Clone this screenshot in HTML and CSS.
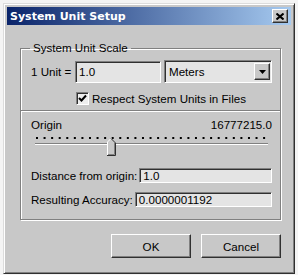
FILE: index.html
```html
<!DOCTYPE html>
<html lang="en">
<head>
    <meta charset="UTF-8">
    <title>System Unit Setup</title>
    <link rel="stylesheet" href="styles.css">
</head>
<body>
    <div class="window">
        <div class="titlebar">
            <span class="title">System Unit Setup</span>
            <span class="close">
                <svg width="8" height="7" viewBox="0 0 8 7"><path d="M0.5 0.5 L7.5 6.5 M7.5 0.5 L0.5 6.5" stroke="#000" stroke-width="2"/></svg>
            </span>
        </div>

        <div class="content">
            <fieldset class="group">
                <legend>System Unit Scale</legend>

                <div class="row unit-row">
                    <span class="unit-label">1 Unit =</span>
                    <div class="field unit-value">1.0</div>
                    <div class="select">
                        <span class="select-text">Meters</span>
                        <span class="select-arrow">
                            <svg width="7" height="4" viewBox="0 0 7 4"><path d="M0 0 H7 L3.5 4 Z" fill="#000"/></svg>
                        </span>
                    </div>
                </div>

                <div class="row check-row">
                    <span class="checkbox">
                        <svg width="9" height="9" viewBox="0 0 9 9"><path d="M1 4 L3.5 6.5 L8 1.5" fill="none" stroke="#000" stroke-width="2"/></svg>
                    </span>
                    <span>Respect System Units in Files</span>
                </div>

                <div class="separator"></div>

                <div class="row origin-row">
                    <span>Origin</span>
                    <span>16777215.0</span>
                </div>

                <div class="slider">
                    <svg class="ticks" width="230" height="2" viewBox="0 0 230 2"><line x1="0" y1="1" x2="230" y2="1" stroke="#000" stroke-width="2" stroke-dasharray="2 5.57"/></svg>
                    <div class="track"></div>
                    <svg class="thumb" width="9" height="18" viewBox="0 0 9 18">
                        <path d="M0 4 L4 0 L8 4 V17 H0 Z" fill="#c8c8c8"/>
                        <path d="M0.5 17 V4 L4 0.5" fill="none" stroke="#fff"/>
                        <path d="M4 0.5 L8.5 5 V17.5 H0" fill="none" stroke="#303030"/>
                        <path d="M7.5 5 V16.5 H1" fill="none" stroke="#808080"/>
                    </svg>
                </div>

                <div class="row field-row first">
                    <span class="field-label">Distance from origin:</span>
                    <div class="field small">1.0</div>
                </div>
                <div class="row field-row">
                    <span class="field-label">Resulting Accuracy:</span>
                    <div class="field small">0.0000001192</div>
                </div>
            </fieldset>

            <div class="buttons">
                <button class="btn">OK</button>
                <button class="btn">Cancel</button>
            </div>
        </div>
    </div>
</body>
</html>
```

FILE: styles.css
```css
body {
    margin: 0;
    background-color: #f4f4f4;
    font-family: 'Liberation Sans', Arial, sans-serif;
    font-size: 11.6px;
    color: #000000;
}

.window {
    margin: 3px 0 0 3px;
    width: 292px;
    height: 271px;
    box-sizing: border-box;
    background-color: #c8c8c8;
    border: 1px solid;
    border-color: #dcdcdc #303030 #303030 #dcdcdc;
    box-shadow: inset 1px 1px 0 #ffffff, inset -1px -1px 0 #808080;
    padding: 3px;
}

/* Titel */
.titlebar {
    height: 18px;
    display: flex;
    align-items: center;
    justify-content: space-between;
    background: linear-gradient(90deg, #0a246a, #a6caf0);
}

.title {
    padding-left: 3px;
    color: #ffffff;
    font-family: 'DejaVu Sans', sans-serif;
    font-weight: bold;
    font-size: 11px;
}

.close {
    width: 16px;
    height: 14px;
    margin-right: 3px;
    box-sizing: border-box;
    display: flex;
    align-items: center;
    justify-content: center;
    background-color: #c8c8c8;
    border: 1px solid;
    border-color: #ffffff #303030 #303030 #ffffff;
    box-shadow: inset -1px -1px 0 #808080;
}

.group {
    margin: 16px 0 0 13px;
    width: 261px;
    box-sizing: border-box;
    padding: 5px 8px 12px 10px;
    border: 1px solid #808080;
    box-shadow: inset 1px 1px 0 #ffffff, 1px 1px 0 #ffffff;
    min-width: 0;
}

.group legend {
    padding: 0 3px;
    margin-left: -1px;
    line-height: 14px;
}

.row {
    display: flex;
    align-items: center;
    white-space: nowrap;
}

.field {
    box-sizing: border-box;
    background-color: #e4e4e4;
    border: 1px solid;
    border-color: #808080 #ffffff #ffffff #808080;
    box-shadow: inset 1px 1px 0 #303030;
    padding-left: 3px;
    display: flex;
    align-items: center;
}

.unit-row {
    height: 23px;
}

.unit-label {
    width: 44px;
}

.unit-value {
    width: 86px;
    height: 22px;
}

.select {
    margin-left: 3px;
    width: 108px;
    height: 23px;
    box-sizing: border-box;
    display: flex;
    align-items: center;
    justify-content: space-between;
    background-color: #e4e4e4;
    border: 1px solid;
    border-color: #808080 #ffffff #ffffff #808080;
    box-shadow: inset 1px 1px 0 #303030;
    padding: 2px 1px 2px 4px;
}

.select-arrow {
    width: 16px;
    height: 17px;
    box-sizing: border-box;
    display: flex;
    align-items: center;
    justify-content: center;
    background-color: #c8c8c8;
    border: 1px solid;
    border-color: #ffffff #303030 #303030 #ffffff;
    box-shadow: inset -1px -1px 0 #808080;
}

.check-row {
    margin-top: 9px;
    padding-left: 45px;
    height: 13px;
}

.checkbox {
    width: 13px;
    height: 13px;
    margin-right: 3px;
    box-sizing: border-box;
    display: flex;
    align-items: center;
    justify-content: center;
    background-color: #eeeeee;
    border: 1px solid;
    border-color: #808080 #ffffff #ffffff #808080;
    box-shadow: inset 1px 1px 0 #303030;
}

.separator {
    margin: 5px -8px 0 -10px;
    height: 0;
    border-top: 1px solid #808080;
    border-bottom: 1px solid #ffffff;
}

.origin-row {
    margin-top: 6px;
    justify-content: space-between;
    line-height: 14px;
}

.slider {
    position: relative;
    height: 20px;
    margin-top: 2px;
}

.ticks {
    display: block;
    margin: 5px 0 0 5px;
}

.track {
    margin: 4px 4px 0 4px;
    height: 0;
    border-top: 1px solid #808080;
    border-bottom: 1px solid #ffffff;
}

.thumb {
    position: absolute;
    left: 76px;
    top: 1px;
}

.field-row {
    margin-top: 9px;
    height: 15px;
}

.field-row.first {
    margin-top: 11px;
}

.field-label {
    flex-shrink: 0;
}

.small {
    flex: 1;
    margin-left: 2px;
    height: 15px;
}

.buttons {
    margin: 14px 0 0 13px;
    width: 261px;
    display: flex;
    justify-content: flex-end;
    gap: 10px;
}

.btn {
    width: 80px;
    height: 24px;
    font-family: 'Liberation Sans', Arial, sans-serif;
    font-size: 11.6px;
    color: #000000;
    background-color: #c8c8c8;
    border: 1px solid;
    border-color: #ffffff #303030 #303030 #ffffff;
    box-shadow: inset -1px -1px 0 #808080;
    padding: 0;
}
```
